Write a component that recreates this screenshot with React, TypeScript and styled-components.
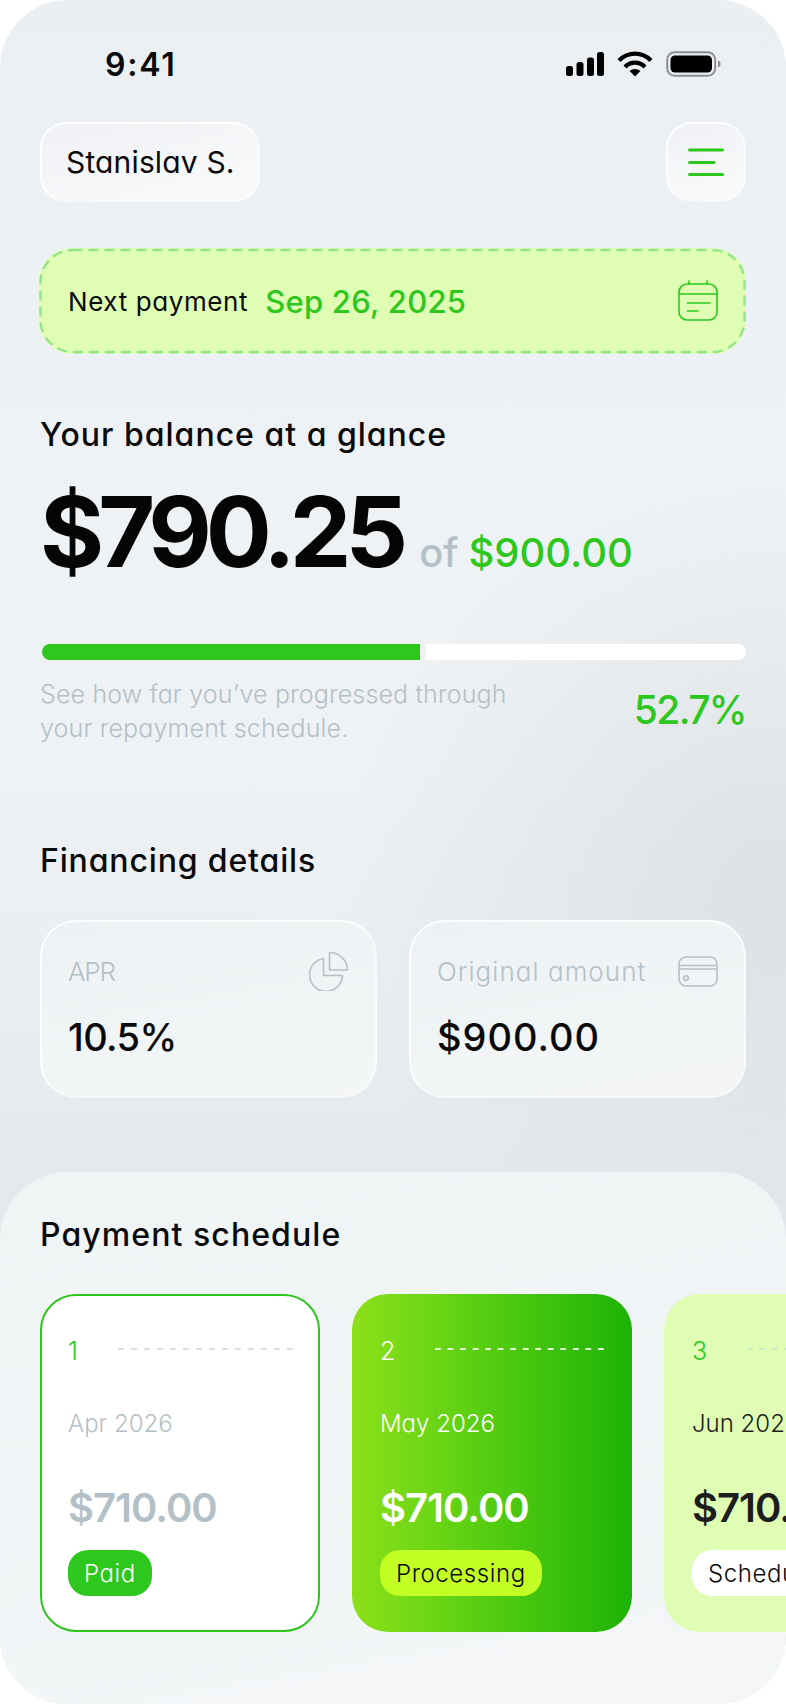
import React from "react";
import styled, { createGlobalStyle } from "styled-components";

const GREEN = "#2dc71e";
const GREY = "#b4c0c7";
const FONT = `Inter, "Noto Sans", "Liberation Sans", sans-serif`;

const Global = createGlobalStyle`
  html, body { margin: 0; padding: 0; background: #fff; }
  * { box-sizing: border-box; }
  body { font-family: ${FONT}; font-feature-settings: "cv11" 1; }
`;

const Screen = styled.div`
  position: relative;
  width: 786px;
  height: 1704px;
  border-radius: 68px;
  overflow: hidden;
  display: flex;
  flex-direction: column;
  background:
    radial-gradient(440px 420px at 780px 900px, #dce1e5 0%, rgba(220, 225, 229, 0) 100%),
    linear-gradient(180deg, #ebeff2 0%, #eff2f5 28%, #eff2f4 45%, #eaeef0 58%, #e5e9ec 68%);
`;

const Top = styled.div`
  padding: 0 40px;
  display: flex;
  flex-direction: column;
`;

const StatusBar = styled.div`
  height: 122px;
  padding: 50px 25px 0 65px;
  display: flex;
  justify-content: space-between;
  align-items: flex-start;
`;

const Time = styled.div`
  font-size: 32px;
  line-height: 29px;
  font-weight: 600;
  color: #0a0a0a;
  letter-spacing: 1.8px;
`;

const StatusIcons = styled.div`
  display: flex;
  align-items: center;
  height: 28px;
  gap: 13px;
`;

const Header = styled.div`
  height: 80px;
  display: flex;
  justify-content: space-between;
`;

const Glass = styled.div`
  border-radius: 26px;
  border: 2px solid rgba(255, 255, 255, 0.85);
  border-right-color: rgba(255, 255, 255, 0.6);
  border-bottom-color: rgba(255, 255, 255, 0.5);
  background: linear-gradient(165deg, #eff1f4 0%, #f6f7f9 60%, #f9fafb 100%);
  display: flex;
  align-items: center;
`;

const NamePill = styled(Glass)`
  width: 220px;
  padding-left: 24px;
  font-size: 30px;
  color: #0a0a0a;
  letter-spacing: 0.15px;
`;

const MenuButton = styled(Glass)`
  width: 80px;
  justify-content: center;
`;

const Banner = styled.div`
  position: relative;
  margin: 46px 0 0 -1px;
  height: 106px;
  border-radius: 33px;
  background: #dffdb3;
  display: flex;
  align-items: center;
  padding: 0 28px 0 29px;
`;

const DashedEdge = styled.svg`
  position: absolute;
  inset: 0;
  pointer-events: none;
`;

const BannerLabel = styled.span`
  font-size: 26px;
  color: #0a0a0a;
  letter-spacing: 0.6px;
  margin-right: 17px;
`;

const BannerDate = styled.span`
  font-size: 31px;
  font-weight: 500;
  color: ${GREEN};
  letter-spacing: 0.25px;
  flex: 1;
`;

const SectionTitle = styled.h2<{ $top: number; $track: number }>`
  margin: ${(p) => p.$top}px 0 0;
  font-size: 32px;
  line-height: 40px;
  font-weight: 500;
  letter-spacing: ${(p) => p.$track}px;
  color: #0a0a0a;
`;

const AmountRow = styled.div`
  margin-top: 27px;
  height: 100px;
  display: flex;
  align-items: baseline;
  line-height: 100px;
`;

const BigAmount = styled.span`
  font-size: 98px;
  font-weight: 700;
  letter-spacing: -6px;
  color: #050505;
`;

const Of = styled.span`
  font-size: 40px;
  font-weight: 500;
  color: ${GREY};
  margin-left: 17px;
`;

const Total = styled.span`
  font-size: 40px;
  font-weight: 500;
  color: ${GREEN};
  margin-left: 10px;
`;

const Track = styled.div`
  margin-top: 62px;
  margin-left: 2px;
  height: 16px;
  border-radius: 8px;
  display: flex;
  gap: 6px;
`;

const TrackFill = styled.div`
  width: 378px;
  background: ${GREEN};
  border-radius: 8px 0 0 8px;
`;

const TrackRest = styled.div`
  flex: 1;
  background: #fff;
  border-radius: 0 8px 8px 0;
`;

const ProgressInfo = styled.div`
  margin-top: 17px;
  display: flex;
  justify-content: space-between;
  align-items: center;
`;

const Hint = styled.p`
  margin: 0;
  width: 490px;
  font-size: 25px;
  line-height: 34px;
  font-weight: 300;
  letter-spacing: 0.15px;
  color: ${GREY};
`;

const Percent = styled.span`
  font-size: 39px;
  font-weight: 500;
  letter-spacing: -1.6px;
  margin-bottom: 4px;
  color: ${GREEN};
`;

const DetailGrid = styled.div`
  margin-top: 39px;
  display: grid;
  grid-template-columns: 337px 1fr;
  gap: 32px;
`;

const DetailCard = styled(Glass)`
  height: 178px;
  border-radius: 36px;
  padding: 29px 26px 0 26px;
  flex-direction: column;
  align-items: stretch;
  background: linear-gradient(170deg, #eef1f3 0%, #f2f5f6 60%, #f3f5f7 100%);
`;

const DetailHead = styled.div`
  height: 40px;
  display: flex;
  justify-content: space-between;
  align-items: center;
`;

const DetailLabel = styled.span<{ $track: number }>`
  font-size: 26px;
  font-weight: 300;
  letter-spacing: ${(p) => p.$track}px;
  color: ${GREY};
`;

const DetailValue = styled.div<{ $track: number }>`
  margin-top: 23px;
  font-size: 38px;
  line-height: 46px;
  font-weight: 500;
  letter-spacing: ${(p) => p.$track}px;
  color: #0a0a0a;
`;

const Sheet = styled.div`
  margin-top: 74px;
  flex: 1;
  border-radius: 68px;
  padding: 43px 0 0 40px;
  background: linear-gradient(170deg, #f0f4f5 0%, #f4f6f8 100%);
  overflow: hidden;
`;

const CardRow = styled.div`
  margin-top: 39px;
  display: flex;
  gap: 32px;
`;

type Tone = "paid" | "active" | "soft";

const toneBackground: Record<Tone, string> = {
  paid: "#fff",
  active: "linear-gradient(90deg, #8ce01a 0%, #5fd113 40%, #1db307 100%)",
  soft: "#dffdb3",
};

const PayCard = styled.div<{ $tone: Tone }>`
  flex: 0 0 280px;
  height: 338px;
  border-radius: 36px;
  background: ${(p) => toneBackground[p.$tone]};
  border: ${(p) => (p.$tone === "paid" ? `2px solid ${GREEN}` : "none")};
  padding-top: ${(p) => (p.$tone === "paid" ? 38 : 40)}px;
  padding-left: ${(p) => (p.$tone === "paid" ? 26 : 28)}px;
  padding-right: ${(p) => (p.$tone === "paid" ? 25 : 28)}px;
`;

const StepRow = styled.div`
  display: flex;
  align-items: center;
  gap: 40px;
  height: 34px;
`;

const StepNumber = styled.span<{ $tone: Tone }>`
  font-size: 25px;
  font-weight: 300;
  color: ${(p) => (p.$tone === "active" ? "#fff" : GREEN)};
`;

const StepDash = styled.div<{ $tone: Tone }>`
  flex: 1;
  height: 2px;
  margin-top: -4px;
  background-image: linear-gradient(
    90deg,
    ${(p) => (p.$tone === "paid" ? "#d9e0e3" : p.$tone === "active" ? "#dff6cf" : "#cfe8c8")} 6px,
    transparent 6px
  );
  background-size: calc((100% - 6px) / 13) 100%;
`;

const Month = styled.div<{ $tone: Tone }>`
  margin-top: 39px;
  font-size: 24px;
  line-height: 34px;
  font-weight: 300;
  white-space: nowrap;
  color: ${(p) => (p.$tone === "paid" ? GREY : p.$tone === "active" ? "#fff" : "#1d1d1d")};
`;

const CardAmount = styled.div<{ $tone: Tone }>`
  margin-top: 42px;
  font-size: 40px;
  line-height: 50px;
  font-weight: 600;
  letter-spacing: -1px;
  white-space: nowrap;
  color: ${(p) => (p.$tone === "paid" ? GREY : p.$tone === "active" ? "#fff" : "#1d1d1d")};
`;

const Badge = styled.div<{ $tone: Tone }>`
  margin-top: 17px;
  display: inline-flex;
  align-items: center;
  height: 46px;
  padding: 0 16px;
  border-radius: 20px;
  font-size: 24px;
  font-weight: 300;
  letter-spacing: 0.6px;
  white-space: nowrap;
  color: ${(p) => (p.$tone === "paid" ? "#fff" : "#0a0a0a")};
  background: ${(p) => (p.$tone === "paid" ? GREEN : p.$tone === "active" ? "#c3ff24" : "#fff")};
`;

const SignalIcon = () => (
  <svg width="38" height="24" viewBox="0 0 38 24">
    <rect x="0" y="14" width="7" height="10" rx="2.5" fill="#000" />
    <rect x="10.5" y="10" width="7" height="14" rx="2.5" fill="#000" />
    <rect x="21" y="5.5" width="7" height="18.5" rx="2.5" fill="#000" />
    <rect x="31" y="0" width="7" height="24" rx="2.5" fill="#000" />
  </svg>
);

const WifiIcon = () => (
  <svg width="36" height="26" viewBox="0 0 36 26" fill="none" stroke="#000" strokeWidth="4.2">
    <path d="M2 9.5C6.2 5.2 11.8 2.6 18 2.6S29.8 5.2 34 9.5" />
    <path d="M8 16C10.6 13.2 14 11.6 18 11.6S25.4 13.2 28 16" />
    <path d="M18 25.5L12.6 20C14 18.7 15.8 18 18 18S22 18.7 23.4 20Z" fill="#000" stroke="none" />
  </svg>
);

const BatteryIcon = () => (
  <svg width="55" height="26" viewBox="0 0 55 26">
    <rect x="1.2" y="1.2" width="48" height="23.6" rx="7.5" fill="none" stroke="#8e8e8e" strokeWidth="2" />
    <rect x="4.5" y="4.5" width="41.5" height="17" rx="4.5" fill="#000" />
    <path d="M52 9.5C53.6 10 54.5 11.4 54.5 13S53.6 16 52 16.5Z" fill="#8e8e8e" />
  </svg>
);

const MenuIcon = () => (
  <svg width="36" height="28" viewBox="0 0 36 28" fill="none" stroke={GREEN} strokeWidth="3" strokeLinecap="round">
    <path d="M1.5 2H34.5" />
    <path d="M1.5 14.5H26" />
    <path d="M1.5 26.5H34.5" />
  </svg>
);

const CalendarIcon = () => (
  <svg width="40" height="42" viewBox="0 0 40 42" fill="none" stroke={GREEN} strokeWidth="1.6" strokeLinecap="round">
    <rect x="1" y="4" width="38" height="36" rx="8" />
    <path d="M1 14H39" />
    <path d="M11 1V4M29 1V4" />
    <path d="M9.5 23H32" />
    <path d="M9.5 31H20" />
  </svg>
);

const PieIcon = () => (
  <svg width="40" height="40" viewBox="0 0 40 40" fill="none" stroke={GREY} strokeWidth="1.6" strokeLinejoin="round">
    <path d="M14.5 7.5A16.5 16.5 0 1 0 33.5 24.5H14.5Z" />
    <path d="M20.5 1.5A18 18 0 0 1 38.5 19H20.5Z" />
  </svg>
);

const CardIcon = () => (
  <svg width="40" height="31" viewBox="0 0 40 31" fill="none" stroke={GREY} strokeWidth="1.6">
    <rect x="1" y="1" width="38" height="29" rx="7" />
    <path d="M1 9.5H39M1 13H39" />
    <circle cx="8" cy="22" r="2.3" />
  </svg>
);

const schedule: { tone: Tone; step: string; month: string; status: string }[] = [
  { tone: "paid", step: "1", month: "Apr 2026", status: "Paid" },
  { tone: "active", step: "2", month: "May 2026", status: "Processing" },
  { tone: "soft", step: "3", month: "Jun 2026", status: "Scheduled" },
];

export default function App() {
  return (
    <>
      <Global />
      <Screen>
        <Top>
          <StatusBar>
            <Time>9:41</Time>
            <StatusIcons>
              <SignalIcon />
              <WifiIcon />
              <BatteryIcon />
            </StatusIcons>
          </StatusBar>
          <Header>
            <NamePill>Stanislav S.</NamePill>
            <MenuButton>
              <MenuIcon />
            </MenuButton>
          </Header>
          <Banner>
            <DashedEdge width="707" height="106" viewBox="0 0 707 106" fill="none">
              <rect x="1.5" y="2" width="704" height="102" rx="32" stroke="#93e58a" strokeWidth="2.4" strokeDasharray="10 6" />
            </DashedEdge>
            <BannerLabel>Next payment</BannerLabel>
            <BannerDate>Sep 26, 2025</BannerDate>
            <CalendarIcon />
          </Banner>
          <SectionTitle $top={61} $track={1}>Your balance at a glance</SectionTitle>
          <AmountRow>
            <BigAmount>$790.25</BigAmount>
            <Of>of</Of>
            <Total>$900.00</Total>
          </AmountRow>
          <Track>
            <TrackFill />
            <TrackRest />
          </Track>
          <ProgressInfo>
            <Hint>See how far you’ve progressed through your repayment schedule.</Hint>
            <Percent>52.7%</Percent>
          </ProgressInfo>
          <SectionTitle $top={96} $track={0.85}>Financing details</SectionTitle>
          <DetailGrid>
            <DetailCard>
              <DetailHead>
                <DetailLabel $track={-1.2}>APR</DetailLabel>
                <PieIcon />
              </DetailHead>
              <DetailValue $track={-0.6}>10.5%</DetailValue>
            </DetailCard>
            <DetailCard>
              <DetailHead>
                <DetailLabel $track={1.05}>Original amount</DetailLabel>
                <CardIcon />
              </DetailHead>
              <DetailValue $track={1}>$900.00</DetailValue>
            </DetailCard>
          </DetailGrid>
        </Top>
        <Sheet>
          <SectionTitle $top={0} $track={1.08}>Payment schedule</SectionTitle>
          <CardRow>
            {schedule.map((c) => (
              <PayCard key={c.step} $tone={c.tone}>
                <StepRow>
                  <StepNumber $tone={c.tone}>{c.step}</StepNumber>
                  <StepDash $tone={c.tone} />
                </StepRow>
                <Month $tone={c.tone}>{c.month}</Month>
                <CardAmount $tone={c.tone}>$710.00</CardAmount>
                <Badge $tone={c.tone}>{c.status}</Badge>
              </PayCard>
            ))}
          </CardRow>
        </Sheet>
      </Screen>
    </>
  );
}
